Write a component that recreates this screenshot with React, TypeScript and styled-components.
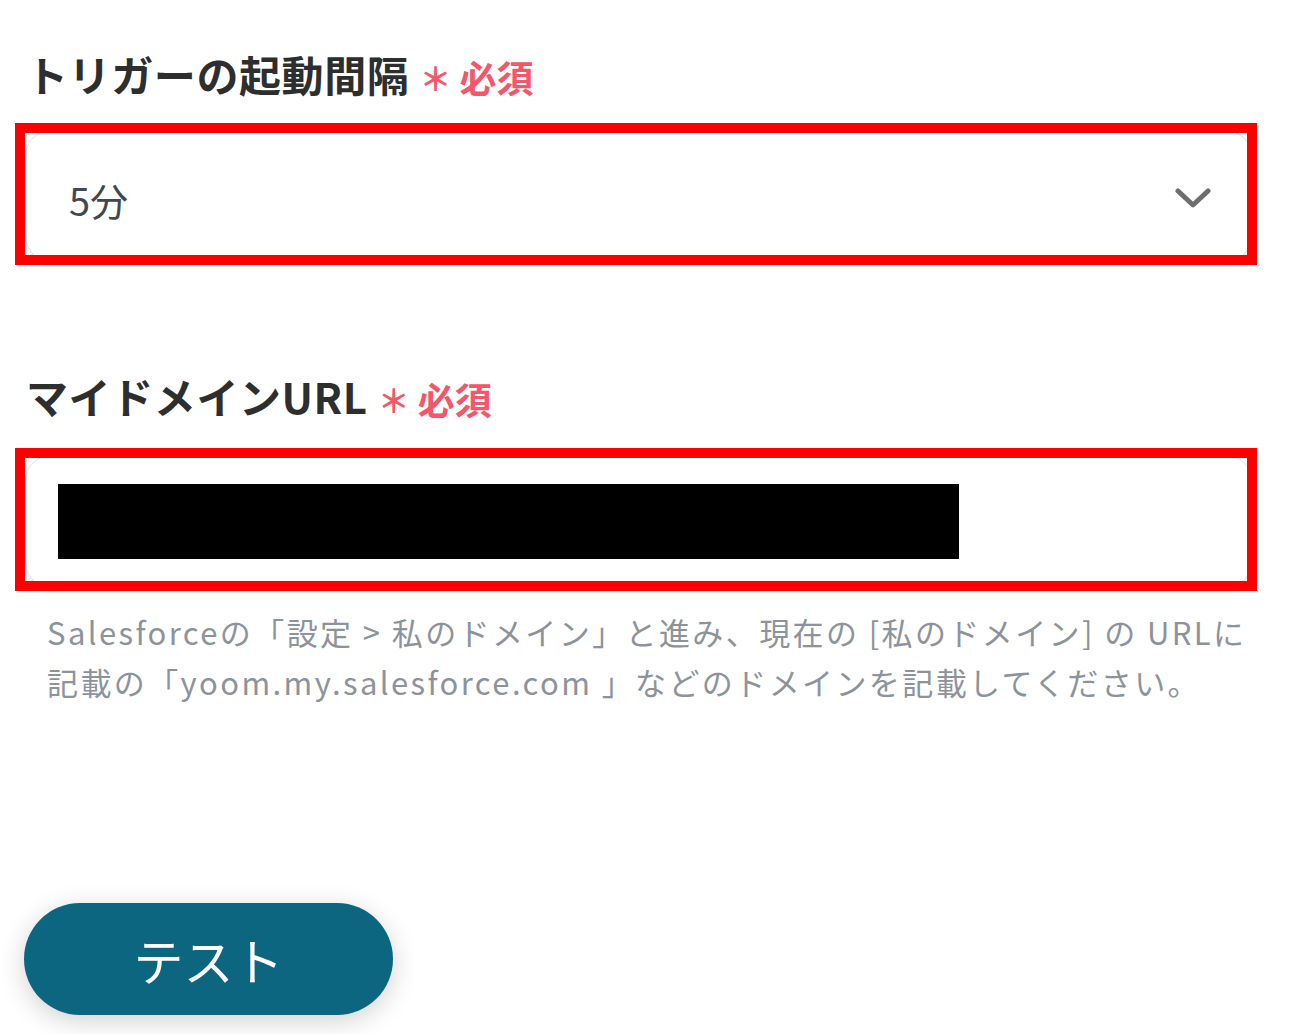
import styled, { createGlobalStyle } from 'styled-components';

const GlobalStyle = createGlobalStyle`
  body {
    margin: 0;
    background: #ffffff;
    font-family: "Noto Sans CJK JP", "Noto Sans", sans-serif;
  }
`;

const Page = styled.div`
  width: 1293px;
  height: 1034px;
  padding-top: 50px;
  box-sizing: border-box;
  overflow: hidden;
  display: flex;
  flex-direction: column;
`;

const Field = styled.section<{ $top: number }>`
  display: flex;
  flex-direction: column;
  margin-top: ${(p) => p.$top}px;
`;

const LabelRow = styled.div<{ $gap: number }>`
  display: flex;
  align-items: center;
  gap: 10px;
  padding-left: 26px;
  height: 48px;
  margin-bottom: ${(p) => p.$gap}px;
`;

const LabelText = styled.span`
  font-size: 42px;
  font-weight: 700;
  color: #2e2e2e;
  letter-spacing: 0.6px;
  line-height: 48px;
`;

const Required = styled.span`
  display: flex;
  align-items: center;
  gap: 8px;
  font-size: 37px;
  font-weight: 700;
  color: #f4566a;
  line-height: 48px;
  padding-top: 6px;
`;

const Star = styled.span`
  font-size: 32px;
  font-weight: 700;
`;

const Highlight = styled.div<{ $h: number }>`
  position: relative;
  margin-left: 25px;
  width: 1227px;
  height: ${(p) => p.$h}px;

  &::after {
    content: '';
    position: absolute;
    left: -10px;
    right: -5px;
    top: -7px;
    bottom: -3px;
    border: 10px solid #ff0000;
    pointer-events: none;
  }
`;

const Box = styled.div`
  height: 100%;
  box-sizing: border-box;
  border: 1px solid #dde2e8;
  border-radius: 26px;
  background: #ffffff;
  box-shadow: 0 3px 4px rgba(30, 50, 80, 0.1);
  display: flex;
  align-items: center;
  justify-content: space-between;
  padding: 6px 40px 0 43px;
`;

const Value = styled.span`
  font-size: 38px;
  color: #414852;
`;

const Redacted = styled.div`
  width: 901px;
  height: 75px;
  background: #000000;
  margin-left: -11px;
  margin-top: -6px;
`;

const Help = styled.p`
  margin: 19px 0 0 47px;
  font-size: 31px;
  line-height: 50px;
  color: #8d939b;
  letter-spacing: 2.4px;
  white-space: nowrap;
`;

const TestButton = styled.button`
  margin: 196px 0 0 24px;
  width: 369px;
  height: 112px;
  border: none;
  border-radius: 56px;
  background: #0d6680;
  color: #ffffff;
  font-family: inherit;
  font-size: 50px;
  box-shadow: 0 6px 26px rgba(0, 0, 0, 0.18);
  cursor: pointer;
`;

const Chevron = () => (
  <svg width="36" height="24" viewBox="0 0 36 24">
    <polyline
      points="3,4 18,18 33,4"
      fill="none"
      stroke="#6e6e6e"
      strokeWidth="5"
      strokeLinecap="round"
      strokeLinejoin="round"
    />
  </svg>
);

const RequiredMark = () => (
  <Required>
    <Star>＊</Star>
    必須
  </Required>
);

export default function App() {
  return (
    <>
      <GlobalStyle />
      <Page>
        <Field $top={0}>
          <LabelRow $gap={32}>
            <LabelText>トリガーの起動間隔</LabelText>
            <RequiredMark />
          </LabelRow>
          <Highlight $h={132}>
            <Box>
              <Value>5分</Value>
              <Chevron />
            </Box>
          </Highlight>
        </Field>

        <Field $top={110}>
          <LabelRow $gap={35}>
            <LabelText>マイドメインURL</LabelText>
            <RequiredMark />
          </LabelRow>
          <Highlight $h={133}>
            <Box>
              <Redacted />
            </Box>
          </Highlight>
        </Field>

        <Help>
          Salesforceの「設定 &gt; 私のドメイン」と進み、現在の [私のドメイン] の URLに
          <br />
          記載の「yoom.my.salesforce.com 」などのドメインを記載してください。
        </Help>

        <TestButton>テスト</TestButton>
      </Page>
    </>
  );
}
